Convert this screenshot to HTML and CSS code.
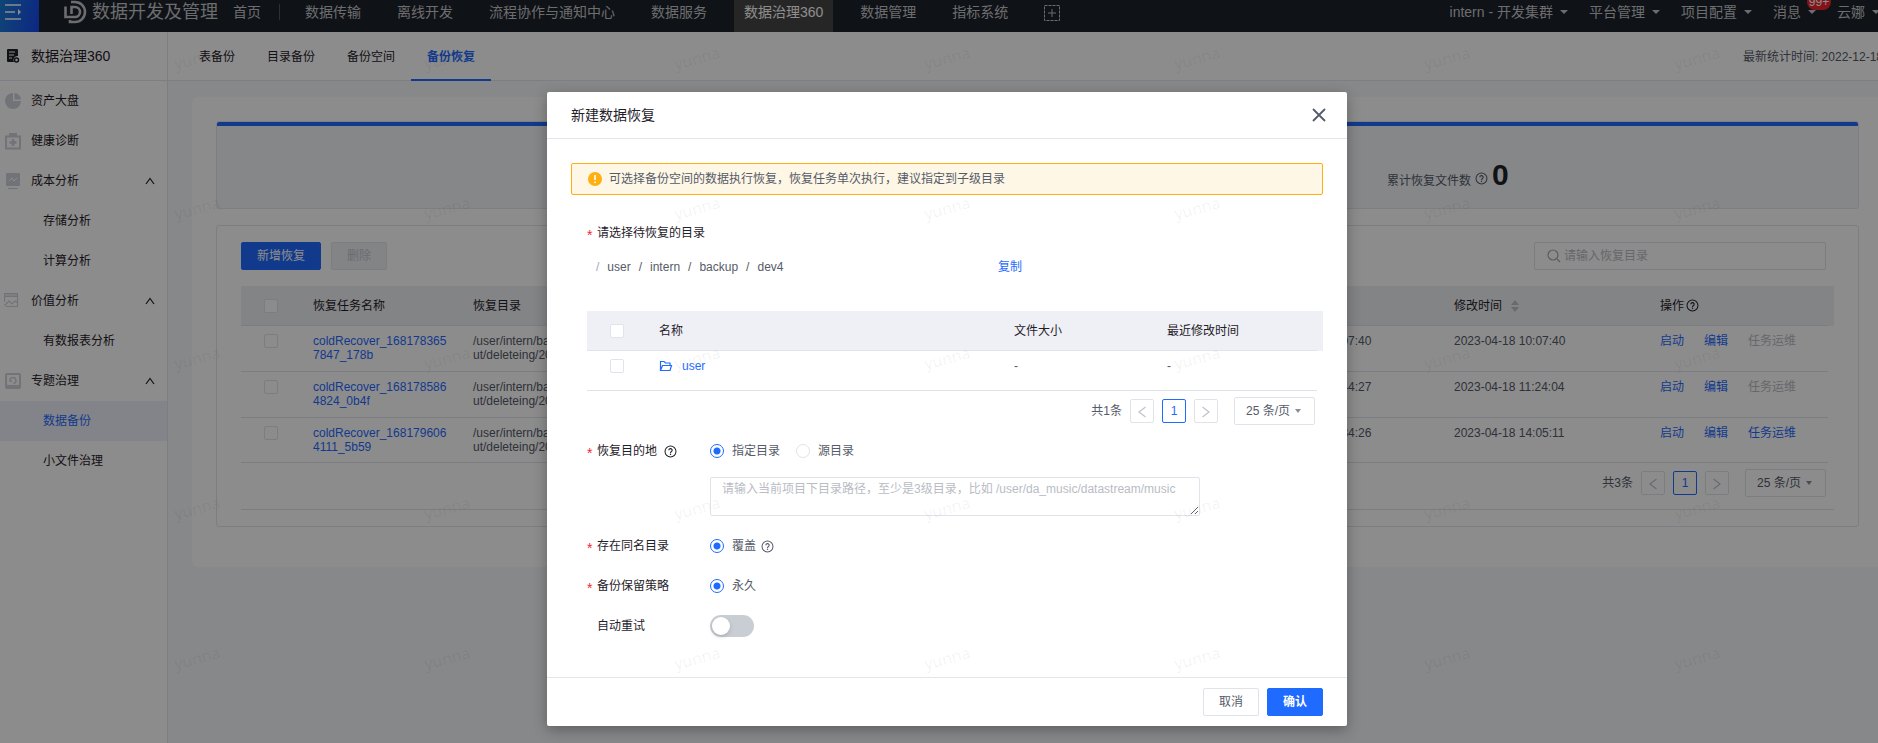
FILE: index.html
```html
<!DOCTYPE html>
<html lang="zh-CN">
<head>
    <meta charset="UTF-8">
    <meta name="viewport" content="width=device-width, initial-scale=1.0">
    <title>数据治理360</title>
    <link rel="stylesheet" href="styles.css">
</head>
<body>
    <svg class="sprite" aria-hidden="true">
        <symbol id="i-help" viewBox="0 0 14 14">
            <circle cx="7" cy="7" r="5.9" fill="none" stroke="currentColor" stroke-width="1.1"/>
            <path d="M5.2 5.7a1.8 1.8 0 1 1 2.6 1.6c-.6.3-.8.6-.8 1.2" fill="none" stroke="currentColor" stroke-width="1.2"/>
            <circle cx="7" cy="10" r=".8" fill="currentColor"/>
        </symbol>
        <symbol id="i-up" viewBox="0 0 10 8"><path d="M1 7l4-5.5L9 7" fill="none" stroke="currentColor" stroke-width="1.2"/></symbol>
        <symbol id="i-left" viewBox="0 0 10 12"><path d="M8.5 1L2 6l6.500 5" fill="none" stroke="currentColor" stroke-width="1.2"/></symbol>
        <symbol id="i-right" viewBox="0 0 10 12"><path d="M1.500 1L8 6l-6.500 5" fill="none" stroke="currentColor" stroke-width="1.2"/></symbol>
    </svg>

    <div class="app">
        <header class="topbar">
            <button class="menu-btn" aria-label="菜单">
                <svg width="18" height="18" viewBox="0 0 18 18"><path d="M1 2h16M1 9h10M1 16h16" stroke="#fff" stroke-width="1.6"/><path d="M14 6l3 3-3 3z" fill="#fff"/></svg>
            </button>
            <a class="logo" href="#">
                <svg width="24" height="24" viewBox="0 0 24 24" fill="none" stroke="currentColor" stroke-width="2.600"><path d="M8 2h4a9.800 9.800 0 0 1 0 20H7v-2"/><path d="M2.500 6.500V17H12a5 5 0 0 0 0-10H8.500v7"/></svg>
                <span>数据开发及管理</span>
            </a>
            <nav class="nav">
                <a class="nav-home" href="#">首页</a>
                <a href="#">数据传输</a>
                <a href="#">离线开发</a>
                <a href="#">流程协作与通知中心</a>
                <a href="#">数据服务</a>
                <a class="active" href="#">数据治理360</a>
                <a href="#">数据管理</a>
                <a href="#">指标系统</a>
                <button class="nav-add" aria-label="添加">
                    <svg width="16" height="16" viewBox="0 0 16 16" fill="none" stroke="currentColor"><rect x=".5" y=".5" width="15" height="15" stroke-dasharray="3 1"/><path d="M8 4v8M4 8h8"/></svg>
                </button>
            </nav>
            <div class="user-nav">
                <a href="#">intern - 开发集群<i class="caret"></i></a>
                <a href="#">平台管理<i class="caret"></i></a>
                <a href="#">项目配置<i class="caret"></i></a>
                <a class="message" href="#">消息<i class="caret"></i><span class="badge">99+</span></a>
                <a href="#">云娜<i class="caret"></i></a>
            </div>
        </header>

        <div class="layout">
            <aside class="sidebar">
                <div class="sidebar-title">
                    <svg width="14" height="16" viewBox="0 0 14 16"><path d="M2 1h9a1 1 0 0 1 1 1v6a4 4 0 0 0-4 6H2a1 1 0 0 1-1-1V2a1 1 0 0 1 1-1z" fill="currentColor"/><path d="M3 4h6M3 7h5M3 10h3" stroke="#fff"/><circle cx="10.500" cy="12" r="2" fill="none" stroke="currentColor" stroke-width="1.500"/></svg>
                    <span>数据治理360</span>
                </div>
                <ul class="menu">
                    <li><a href="#"><svg class="menu-icon" viewBox="0 0 18 18"><path d="M9 1a8 8 0 1 0 8 8H9z"/><path d="M10.500 1a7 7 0 0 1 6.500 6.500h-6.500z"/></svg>资产大盘</a></li>
                    <li><a href="#"><svg class="menu-icon" viewBox="0 0 18 18"><path d="M5 1h8v3H5z"/><path d="M2 4.500h14v12H2z" fill="none" stroke="currentColor" stroke-width="2"/><path d="M9 7v7M5.500 10.500h7" stroke="currentColor" stroke-width="2.500"/></svg>健康诊断</a></li>
                    <li><a href="#"><svg class="menu-icon" viewBox="0 0 18 18"><rect x="2" y="1" width="14" height="13" rx="1"/><path d="M5 9l3-3 2 3 3-3" fill="none" stroke="#fff"/><path d="M4 16.500h10" stroke="currentColor"/></svg>成本分析<svg class="arrow"><use href="#i-up"/></svg></a></li>
                    <li class="sub"><a href="#">存储分析</a></li>
                    <li class="sub"><a href="#">计算分析</a></li>
                    <li><a href="#"><svg class="menu-icon" viewBox="0 0 18 18"><path d="M0 1h14v1.500H0zM0 3.500h14V5H0z"/><path d="M.5 2v8M13.500 2v12.500H2M.5 13.500L5 9l3 3 3-3 3 2" fill="none" stroke="currentColor" stroke-width="1.200"/></svg>价值分析<svg class="arrow"><use href="#i-up"/></svg></a></li>
                    <li class="sub"><a href="#">有数报表分析</a></li>
                    <li><a href="#"><svg class="menu-icon" viewBox="0 0 18 18"><rect x="2" y="2" width="14" height="14" rx="1" fill="none" stroke="currentColor" stroke-width="2"/><path d="M2 13h14v3H2z"/><path d="M5.500 9h2.500M6 9a3 3 0 1 1 3.500 2.500" fill="none" stroke="currentColor" stroke-width="1.400"/></svg>专题治理<svg class="arrow"><use href="#i-up"/></svg></a></li>
                    <li class="sub active"><a href="#">数据备份</a></li>
                    <li class="sub"><a href="#">小文件治理</a></li>
                </ul>
            </aside>

            <div class="content">
                <div class="tabs">
                    <a href="#">表备份</a>
                    <a href="#">目录备份</a>
                    <a href="#">备份空间</a>
                    <a class="active" href="#">备份恢复</a>
                    <span class="updated">最新统计时间: 2022-12-18</span>
                </div>
                <main class="card">
                    <section class="stats">
                        <div></div>
                        <div class="stat">
                            <span>累计恢复文件数</span>
                            <svg class="help"><use href="#i-help"/></svg>
                            <strong>0</strong>
                        </div>
                    </section>

                    <section class="panel">
                        <div class="toolbar">
                            <button class="btn btn-primary btn-wide">新增恢复</button>
                            <button class="btn" disabled>删除</button>
                            <label class="search">
                                <svg width="14" height="14" viewBox="0 0 14 14" fill="none" stroke="currentColor" stroke-width="1.200"><circle cx="6" cy="6" r="5"/><path d="M10 10l3 3"/></svg>
                                <input type="text" placeholder="请输入恢复目录" aria-label="恢复目录">
                            </label>
                        </div>
                        <table class="table">
                            <colgroup>
                                <col class="c-check"><col class="c-task"><col><col class="c-created"><col class="c-modified"><col class="c-ops">
                            </colgroup>
                            <thead>
                                <tr>
                                    <th><input type="checkbox" aria-label="全选"></th>
                                    <th>恢复任务名称</th>
                                    <th>恢复目录</th>
                                    <th></th>
                                    <th>修改时间<svg class="sort" viewBox="0 0 8 12"><path d="M4 0l4 5H0zM4 12l4-5H0z" fill="currentColor"/></svg></th>
                                    <th>操作<svg class="help"><use href="#i-help"/></svg></th>
                                </tr>
                            </thead>
                            <tbody>
                                <tr>
                                    <td><input type="checkbox" aria-label="选择任务"></td>
                                    <td><a href="#">coldRecover_1681783657847_178b</a></td>
                                    <td>/user/intern/backup/outp<br>ut/deleteing/20230418</td>
                                    <td>2023-04-18 10:07:40</td>
                                    <td>2023-04-18 10:07:40</td>
                                    <td class="ops"><a href="#">启动</a><a href="#">编辑</a><a class="off">任务运维</a></td>
                                </tr>
                                <tr>
                                    <td><input type="checkbox" aria-label="选择任务"></td>
                                    <td><a href="#">coldRecover_1681785864824_0b4f</a></td>
                                    <td>/user/intern/backup/outp<br>ut/deleteing/20230418</td>
                                    <td>2023-04-18 10:44:27</td>
                                    <td>2023-04-18 11:24:04</td>
                                    <td class="ops"><a href="#">启动</a><a href="#">编辑</a><a class="off">任务运维</a></td>
                                </tr>
                                <tr>
                                    <td><input type="checkbox" aria-label="选择任务"></td>
                                    <td><a href="#">coldRecover_1681796064111_5b59</a></td>
                                    <td>/user/intern/backup/outp<br>ut/deleteing/20230418</td>
                                    <td>2023-04-18 13:34:26</td>
                                    <td>2023-04-18 14:05:11</td>
                                    <td class="ops"><a href="#">启动</a><a href="#">编辑</a><a href="#">任务运维</a></td>
                                </tr>
                            </tbody>
                        </table>
                        <div class="pager pager-panel">
                            <span>共3条</span>
                            <button aria-label="上一页"><svg><use href="#i-left"/></svg></button>
                            <button class="current">1</button>
                            <button aria-label="下一页"><svg><use href="#i-right"/></svg></button>
                            <label class="page-size">
                                <select aria-label="每页条数"><option>25 条/页</option></select>
                                <i class="caret"></i>
                            </label>
                        </div>
                    </section>
                </main>
            </div>
        </div>

        <div class="mask">
            <div class="modal" role="dialog" aria-labelledby="modal-title">
                <div class="modal-header">
                    <h2 id="modal-title">新建数据恢复</h2>
                    <button class="close" aria-label="关闭">
                        <svg width="14" height="14" viewBox="0 0 14 14" stroke="currentColor" stroke-width="1.800"><path d="M1 1l12 12M13 1L1 13"/></svg>
                    </button>
                </div>
                <form class="modal-body">
                    <div class="alert">
                        <svg width="14" height="14" viewBox="0 0 14 14"><circle cx="7" cy="7" r="7" fill="#ffaf0f"/><path d="M7 3v5M7 9.500v1.500" stroke="#fff" stroke-width="1.600"/></svg>
                        可选择备份空间的数据执行恢复，恢复任务单次执行，建议指定到子级目录
                    </div>

                    <div class="form-row"><span class="label required">请选择待恢复的目录</span></div>
                    <div class="path">
                        <span class="breadcrumb"><i>/</i><span>user</span><b>/</b><span>intern</span><b>/</b><span>backup</span><b>/</b><span>dev4</span></span>
                        <a href="#">复制</a>
                    </div>
                    <div class="picker">
                        <table class="table">
                            <colgroup>
                                <col class="c-check"><col><col class="c-size"><col class="c-time">
                            </colgroup>
                            <thead>
                                <tr>
                                    <th><input type="checkbox" aria-label="全选"></th>
                                    <th>名称</th>
                                    <th>文件大小</th>
                                    <th>最近修改时间</th>
                                </tr>
                            </thead>
                            <tbody>
                                <tr class="single">
                                    <td><input type="checkbox" aria-label="选择 user"></td>
                                    <td><a class="folder" href="#"><svg width="14" height="12" viewBox="0 0 14 12" fill="none" stroke="currentColor" stroke-width="1.200"><path d="M1.500 10.500v-9h3.500l1.500 1.500H11v2M1.500 10.500L3.500 5.500h9l-1.500 5z"/></svg>user</a></td>
                                    <td>-</td>
                                    <td>-</td>
                                </tr>
                            </tbody>
                        </table>
                        <div class="pager">
                            <span>共1条</span>
                            <button type="button" aria-label="上一页"><svg><use href="#i-left"/></svg></button>
                            <button type="button" class="current">1</button>
                            <button type="button" aria-label="下一页"><svg><use href="#i-right"/></svg></button>
                            <label class="page-size">
                                <select aria-label="每页条数"><option>25 条/页</option></select>
                                <i class="caret"></i>
                            </label>
                        </div>
                    </div>

                    <div class="form-row">
                        <span class="label required">恢复目的地<svg class="help"><use href="#i-help"/></svg></span>
                        <label class="radio"><input type="radio" name="target" checked>指定目录</label>
                        <label class="radio"><input type="radio" name="target">源目录</label>
                    </div>
                    <textarea aria-label="恢复目录路径" placeholder="请输入当前项目下目录路径，至少是3级目录，比如 /user/da_music/datastream/music"></textarea>
                    <div class="form-row">
                        <span class="label required">存在同名目录</span>
                        <label class="radio"><input type="radio" name="conflict" checked>覆盖<svg class="help"><use href="#i-help"/></svg></label>
                    </div>
                    <div class="form-row">
                        <span class="label required">备份保留策略</span>
                        <label class="radio"><input type="radio" name="keep" checked>永久</label>
                    </div>
                    <div class="form-row">
                        <label class="label" for="retry">自动重试</label>
                        <input class="switch" type="checkbox" id="retry">
                    </div>
                </form>
                <div class="modal-footer">
                    <button class="btn">取消</button>
                    <button class="btn btn-primary btn-strong">确认</button>
                </div>
            </div>
        </div>

        <div class="watermark" id="watermark" aria-hidden="true"></div>
    </div>

    <script>
        let watermark = document.getElementById('watermark')

        for (let i = 0; i < 35; i++) {
            let mark = document.createElement('span')
            mark.innerText = 'yunna'
            watermark.appendChild(mark)
        }
    </script>
</body>
</html>
```
FILE: styles.css
```css
* {
    box-sizing: border-box;
}
html {
    overflow: hidden;
}
body {
    margin: 0;
    font: 12px/14px "Liberation Sans", "Noto Sans CJK SC", sans-serif;
    color: #555b69;
    overflow: hidden;
}
a {
    color: #1f6bff;
    text-decoration: none;
}
button, input, select, textarea {
    font: inherit;
    color: inherit;
    margin: 0;
}
button {
    padding: 0;
    border: none;
    background: none;
}
.sprite {
    position: absolute;
    width: 0;
    height: 0;
}
.app {
    position: relative;
    min-height: 100vh;
    margin-right: -16px;
    display: flex;
    flex-direction: column;
    background: #f5f7fa;
    overflow: hidden;
}
.help {
    width: 13px;
    height: 13px;
    flex: none;
}
.caret {
    border: 4px solid transparent;
    border-top-color: currentColor;
    border-bottom: none;
}

/* top bar */
.topbar {
    height: 32px;
    display: flex;
    color: #c4c6ca;
    background: #1d2129;
    font-size: 14px;
    line-height: 24px;
    white-space: nowrap;
}
.topbar a {
    color: inherit;
}
.menu-btn {
    width: 39px;
    padding: 3px 0 0 4px;
    background: linear-gradient(100deg, #1c7ed8, #1848f0);
    display: flex;
}
.logo {
    display: flex;
    width: 170px;
    margin-left: 24px;
    gap: 5px;
    font-size: 18px;
}
.nav {
    display: flex;
    gap: 18px;
}
.nav a {
    padding: 0 9px;
}
.nav .nav-home {
    padding: 0 18px 0 0;
    height: 16px;
    margin: 4px -2px 0 0;
    line-height: 16px;
    border-right: 1px solid #55585e;
}
.nav .active {
    padding: 0 10px;
    color: #fff;
    background: #464646;
}
.nav-add {
    height: 16px;
    margin: 5px 0 0 9px;
    line-height: 0;
}
.user-nav {
    display: flex;
    margin-left: auto;
    padding-right: 14px;
    gap: 21px;
}
.user-nav a {
    position: relative;
    display: flex;
    align-items: center;
    height: 24px;
    gap: 7px;
}
.badge {
    position: absolute;
    left: 34px;
    top: -6px;
    width: 24px;
    border-radius: 8px;
    text-align: center;
    color: #fff;
    background: #f0262e;
    font-size: 12px;
    line-height: 16px;
}

/* sidebar */
.layout {
    flex: 1;
    display: flex;
}
.sidebar {
    width: 168px;
    flex: none;
    background: #fff;
    border-right: 1px solid #e3e6ee;
    color: #1f2129;
}
.sidebar-title {
    height: 49px;
    display: flex;
    align-items: center;
    gap: 11px;
    padding-left: 6px;
    border-bottom: 1px solid #e3e6ee;
    font-size: 14px;
}
.menu {
    list-style: none;
    margin: 0;
    padding: 0;
}
.menu a {
    display: flex;
    align-items: center;
    height: 40px;
    padding: 0 12px 0 4px;
    color: inherit;
}
.menu-icon {
    width: 18px;
    height: 18px;
    margin-right: 9px;
    color: #d0d1dc;
    fill: currentColor;
}
.arrow {
    width: 10px;
    height: 8px;
    margin-left: auto;
}
.menu .sub a {
    padding-left: 43px;
}
.menu .active {
    color: #1f6bff;
    background: #eef1f9;
}

/* page content */
.content {
    flex: 1;
    min-width: 0;
}
.tabs {
    display: flex;
    height: 49px;
    padding-left: 15px;
    line-height: 50px;
    background: #fff;
    border-bottom: 1px solid #e3e6ee;
}
.tabs a {
    height: 49px;
    padding: 0 16px;
    color: #1f2129;
}
.tabs .active {
    color: #1f6bff;
    font-weight: bold;
    border-bottom: 2px solid #1f6bff;
}
.updated {
    margin-left: auto;
    padding-right: 11px;
    white-space: nowrap;
}
.card {
    margin: 16px 11px 0 24px;
    padding: 24px 24px 40px;
    border-radius: 6px;
    background: #fff;
}
.stats {
    display: grid;
    grid-template-columns: 1fr 1fr;
    height: 88px;
    margin-bottom: 16px;
    border: 1px solid #e3e6ee;
    border-radius: 3px;
    background: linear-gradient(#1f6bff 4px, #f4f6fa 4px);
}
.stat {
    display: flex;
    justify-content: center;
    align-items: baseline;
    padding-top: 35px;
    gap: 4px;
}
.stat .help {
    margin-bottom: -2px;
}
.stat strong {
    font-size: 30px;
    line-height: 36px;
    color: #1f2129;
}
.panel {
    padding: 16px 24px;
    border: 1px solid #e3e6ee;
    border-radius: 3px;
}
.toolbar {
    display: flex;
    gap: 10px;
    margin-bottom: 16px;
    padding-right: 8px;
}
.btn {
    width: 56px;
    height: 28px;
    border: 1px solid #e1e3eb;
    border-radius: 2px;
    background: #fff;
}
.btn:disabled {
    color: #c3c5cb;
    background: #eff0f5;
}
.btn-primary {
    color: #fff;
    border-color: #1f6bff;
    background: #1f6bff;
}
.btn-wide {
    width: 80px;
}
.btn-strong {
    font-weight: bold;
}
.search {
    display: flex;
    align-items: center;
    width: 292px;
    height: 28px;
    margin-left: auto;
    padding-left: 12px;
    gap: 3px;
    color: #a5a8b0;
    border: 1px solid #e1e3eb;
    border-radius: 2px;
}
.search input {
    flex: 1;
    padding: 0;
    border: none;
    outline: none;
    background: none;
}
::placeholder {
    color: #b9bcc4;
    opacity: 1;
}

.table {
    width: calc(100% - 6px);
    table-layout: fixed;
    border-collapse: separate;
    border-spacing: 0;
}
.table th {
    height: 40px;
    padding: 0 16px 0 8px;
    font-weight: normal;
    text-align: left;
    color: #1f2129;
    background: #eff0f5;
    border-bottom: 1px solid #e1e3eb;
}
.table th:last-child {
    box-shadow: 6px 0 #eff0f5;
}
.table td {
    height: 46px;
    padding: 8px 16px 8px 8px;
    vertical-align: top;
    word-break: break-all;
    border-bottom: 1px solid #e1e3eb;
}
.table tr:last-child td {
    height: 45px;
}
.table .single:last-child td {
    height: 40px;
}
.table th:first-child, .table td:first-child {
    padding-left: 23px;
}
.table th svg {
    vertical-align: -2px;
}
.table .help {
    margin-left: 2px;
}
.c-check {
    width: 64px;
}
.c-task {
    width: 160px;
}
.c-created {
    width: 194px;
}
.c-modified {
    width: 206px;
}
.c-ops {
    width: 176px;
}
.c-size {
    width: 153px;
}
.c-time {
    width: 158px;
}
.sort {
    width: 8px;
    height: 12px;
    margin-left: 9px;
    color: #c0c2cc;
}
input[type="checkbox"], input[type="radio"] {
    appearance: none;
    display: block;
    width: 14px;
    height: 14px;
    border: 1px solid #e1e3eb;
    border-radius: 2px;
    background: #fff;
}
.ops a {
    margin-right: 20px;
}
.table .ops {
    padding-right: 0;
    white-space: nowrap;
}
.ops a:last-child {
    margin-right: 0;
}
.off {
    color: #b9bcc4;
}

/* pagination */
.pager {
    display: flex;
    justify-content: flex-end;
    align-items: center;
    gap: 8px;
    padding: 6px 8px 0 0;
}
.pager-panel {
    padding-bottom: 12px;
    border-bottom: 1px solid #e1e3eb;
}
.pager button {
    width: 24px;
    height: 24px;
    border: 1px solid #e1e3eb;
    border-radius: 2px;
}
.pager button svg {
    display: block;
    width: 10px;
    height: 12px;
    margin: 2px auto 0;
    color: #c0c2cc;
}
.pager .current {
    color: #1f6bff;
    border-color: #1f6bff;
}
.page-size {
    display: flex;
    align-items: center;
    width: 81px;
    height: 28px;
    margin-left: 8px;
    padding-left: 11px;
    gap: 4px;
    border: 1px solid #e1e3eb;
    border-radius: 2px;
}
.page-size select {
    appearance: none;
    padding: 0;
    border: none;
    background: none;
}
.page-size .caret {
    border-width: 4px 3px 0;
    color: #8a8d99;
}

/* modal */
.mask {
    position: absolute;
    top: 0;
    right: 0;
    bottom: 0;
    left: 0;
    display: flex;
    justify-content: center;
    align-items: flex-start;
    padding-top: 92px;
    background: rgba(0, 0, 0, .45);
}
.modal {
    width: 800px;
    background: #fff;
    border-radius: 2px;
    box-shadow: 0 4px 14px rgba(0, 0, 0, .3);
}
.modal-header {
    display: flex;
    justify-content: space-between;
    align-items: center;
    height: 47px;
    padding: 0 21px 0 24px;
    border-bottom: 1px solid #e4e5e9;
}
.modal-header h2 {
    margin: 0;
    font-size: 14px;
    font-weight: normal;
    color: #1f2129;
}
.close {
    line-height: 0;
}
.modal-body {
    padding: 24px 24px 37px;
}
.alert {
    display: flex;
    align-items: center;
    height: 32px;
    margin-bottom: 24px;
    padding-left: 16px;
    gap: 7px;
    border: 1px solid #ffaf0f;
    border-radius: 2px;
    background: #fff7e6;
}
.form-row {
    display: flex;
    align-items: center;
    height: 28px;
    margin: 0 16px 12px;
}
.label {
    display: flex;
    align-items: center;
    width: 123px;
    padding-left: 10px;
    white-space: nowrap;
    color: #1f2129;
}
.required {
    padding-left: 0;
}
.required::before {
    content: "*";
    width: 10px;
    padding-top: 4px;
    color: #f0262e;
    font-size: 14px;
    line-height: 10px;
}
.label .help {
    margin-left: 7px;
}
.path {
    display: flex;
    align-items: center;
    height: 28px;
    margin: -6px 16px 30px 25px;
}
.breadcrumb {
    display: flex;
    width: 402px;
    gap: 8px;
}
.breadcrumb i, .breadcrumb b {
    font-style: normal;
    font-weight: normal;
}
.breadcrumb i {
    color: #a5a8b0;
}
.picker {
    margin: 0 0 12px 16px;
}
.folder {
    display: flex;
    align-items: center;
    gap: 9px;
}
.radio {
    display: flex;
    align-items: center;
    gap: 8px;
    margin-right: 16px;
}
.radio .help {
    margin-left: -3px;
}
input[type="radio"] {
    border-radius: 50%;
}
input[type="radio"]:checked {
    border-color: #1f6bff;
    background: radial-gradient(circle, #1f6bff 3px, #fff 4px);
}
textarea {
    display: block;
    width: 490px;
    height: 39px;
    margin: 0 0 16px 139px;
    padding: 3px 11px;
    border: 1px solid #e1e3eb;
    border-radius: 2px;
    line-height: 16px;
    outline: none;
}
.form-row:last-child {
    margin-bottom: 0;
}
.form-row .switch {
    width: 44px;
    height: 22px;
    border: none;
    border-radius: 11px;
    background: #c9cdd4;
}
.switch::before {
    content: "";
    display: block;
    width: 18px;
    height: 18px;
    margin: 2px;
    border-radius: 50%;
    background: #fff;
    box-shadow: 0 2px 4px rgba(0, 0, 0, .15);
}
.modal-footer {
    display: flex;
    justify-content: flex-end;
    gap: 8px;
    padding: 10px 24px;
    border-top: 1px solid #e4e5e9;
}

.watermark {
    position: absolute;
    top: 0;
    left: 72px;
    display: grid;
    grid-template-columns: repeat(7, 250px);
    grid-auto-rows: 150px;
    font: 16px/116px "Noto Sans", sans-serif;
    text-align: center;
    color: rgba(0, 0, 0, .06);
    pointer-events: none;
}
.watermark span {
    height: 116px;
    transform: rotate(-15deg);
}
```
